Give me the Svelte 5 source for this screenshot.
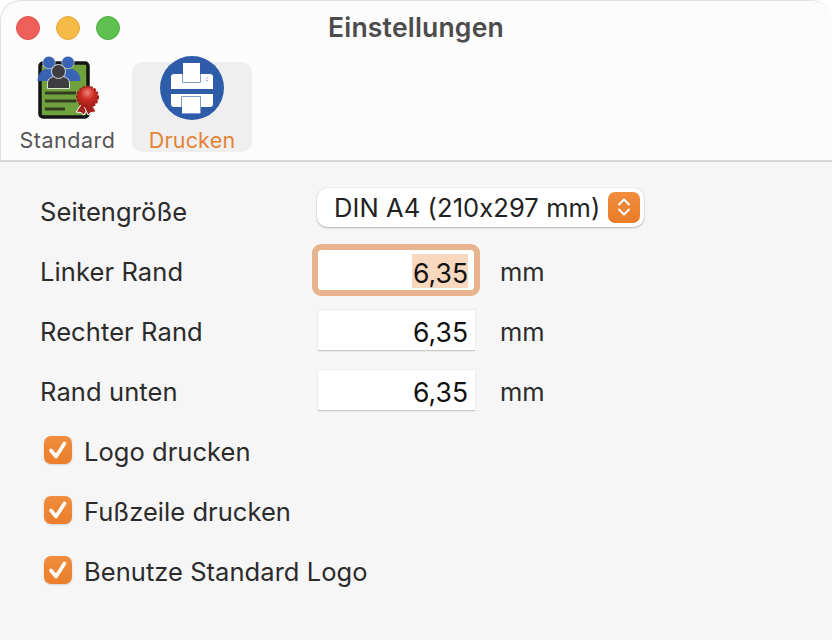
<script lang="ts">
  const fields = [
    { label: 'Linker Rand', value: '6,35', focused: true },
    { label: 'Rechter Rand', value: '6,35', focused: false },
    { label: 'Rand unten', value: '6,35', focused: false },
  ];
  const checks = ['Logo drucken', 'Fußzeile drucken', 'Benutze Standard Logo'];
</script>

<div class="window">
  <header class="toolbar">
    <div class="titlebar">
      <div class="lights">
        <span class="light red"></span>
        <span class="light yellow"></span>
        <span class="light green"></span>
      </div>
      <h1>Einstellungen</h1>
    </div>
    <div class="tabs">
      <div class="tab">
        <svg class="tab-icon" viewBox="0 0 66 66" width="66" height="66">
          <defs>
            <radialGradient id="seal" cx="0.5" cy="0.3" r="0.7">
              <stop offset="0" stop-color="#f0837a" />
              <stop offset="0.45" stop-color="#cf2f26" />
              <stop offset="1" stop-color="#9c1c16" />
            </radialGradient>
          </defs>
          <rect x="5" y="7" width="48" height="54" rx="3" fill="#6fa23c" stroke="#141414" stroke-width="3.500" />
          <path d="M2.500 25c0-6 3-10 8-12h8l4 12z" fill="#3a63b4" />
          <path d="M45.500 25c0-6-3-10-8-12h-8l-4 12z" fill="#3a63b4" />
          <circle cx="14" cy="6.500" r="6.300" fill="#3a63b4" stroke="#fff" stroke-width="0.500" />
          <circle cx="33" cy="6.500" r="6.300" fill="#3a63b4" stroke="#fff" stroke-width="0.500" />
          <path d="M12.500 32.500v-5c0-5 4-7.500 11-7.500s11 2.500 11 7.500v5z" fill="#3e3e42" stroke="#fff" stroke-width="0.800" stroke-linejoin="round" />
          <circle cx="23.500" cy="15.500" r="7" fill="#3e3e42" stroke="#fff" stroke-width="0.800" />
          <path d="M10 37h31M10 45h31M10 53h20" stroke="#333d22" stroke-width="2.800" />
          <path d="M48 46l-7 10 5 .5 3 2.500 5-9z" fill="#a3211b" stroke="#fff" stroke-width="1" />
          <path d="M56 46l5 10-5 .5-3 2.500-4-9z" fill="#a3211b" stroke="#fff" stroke-width="1" />
          <circle cx="52.500" cy="41" r="10.500" fill="url(#seal)" stroke="#a3211b" stroke-width="2" stroke-dasharray="2.500 1.500" />
        </svg>
        <span class="tab-label">Standard</span>
      </div>
      <div class="tab active">
        <svg class="tab-icon" viewBox="0 0 64 64" width="64" height="64">
          <circle cx="32" cy="32" r="32" fill="#2e5ca8" />
          <path d="M14 18h36q3 0 3 3v12H11V21q0-3 3-3z" fill="#fff" />
          <path d="M11 38h42v10q0 3-3 3H14q-3 0-3-3z" fill="#fff" />
          <rect x="22.400" y="7" width="18.200" height="19.600" fill="#2e5ca8" />
          <rect x="23" y="7" width="17" height="19" fill="#fff" />
          <rect x="21.400" y="40.400" width="19.600" height="17.600" fill="#2e5ca8" />
          <rect x="22" y="41" width="18.400" height="16.400" fill="#fff" />
          <circle cx="47" cy="22" r="0.600" fill="#2e5ca8" />
          <circle cx="47" cy="24.500" r="0.600" fill="#2e5ca8" />
        </svg>
        <span class="tab-label">Drucken</span>
      </div>
    </div>
  </header>

  <main class="form">
    <div class="row">
      <span class="label">Seitengröße</span>
      <div class="select">
        <span>DIN A4 (210x297 mm)</span>
        <span class="stepper">
          <svg viewBox="0 0 16 22" width="16" height="22">
            <path d="M3 8.500 8 3.500l5 5M3 13.500 8 18.500l5-5" fill="none" stroke="#fff" stroke-width="2" stroke-linecap="round" stroke-linejoin="round" />
          </svg>
        </span>
      </div>
    </div>

    {#each fields as f}
      <div class="row">
        <span class="label">{f.label}</span>
        <div class="input" class:focused={f.focused}>
          <span class="value" class:selected={f.focused}>{f.value}</span>
        </div>
        <span class="unit">mm</span>
      </div>
    {/each}

    {#each checks as c}
      <div class="check-row">
        <span class="checkbox">
          <svg viewBox="0 0 28 28" width="28" height="28">
            <path d="M7 14.500l5 6 8.500-13" fill="none" stroke="#fff" stroke-width="3.600" stroke-linecap="round" stroke-linejoin="round" />
          </svg>
        </span>
        <span class="check-label">{c}</span>
      </div>
    {/each}
  </main>
</div>

<style>
  :global(body) {
    margin: 0;
    background: #fff;
  }

  .window {
    width: 832px;
    height: 640px;
    overflow: hidden;
    display: flex;
    flex-direction: column;
    background: #f6f6f6;
    border-radius: 20px 20px 0 0;
    font-family: Inter, "Liberation Sans", sans-serif;
    font-feature-settings: "calt" 0;
    color: #262626;
  }

  .toolbar {
    height: 160px;
    flex: none;
    background: #fcfcfc;
    border-bottom: 2px solid #d6d6d6;
    border-radius: 20px 20px 0 0;
    box-shadow: inset 1px 1px 0 #e2e2e2;
  }

  .titlebar {
    height: 54px;
    display: flex;
    align-items: center;
    justify-content: center;
    position: relative;
  }

  .lights {
    position: absolute;
    left: 16px;
    top: 16px;
    display: flex;
    gap: 16px;
  }

  .light {
    width: 24px;
    height: 24px;
    border-radius: 50%;
    box-sizing: border-box;
  }

  .red { background: #f0605a; border: 1px solid #dc544e; }
  .yellow { background: #f6bb47; border: 1px solid #e0a83d; }
  .green { background: #5dc04f; border: 1px solid #50ab44; }

  h1 {
    margin: 0;
    font-size: 26.500px;
    font-weight: 600;
    letter-spacing: 0.200px;
    color: #4c4c4c;
  }

  .tabs {
    display: flex;
    gap: 12px;
    padding-left: 12px;
    margin-top: 2px;
  }

  .tab {
    width: 108px;
    height: 96px;
    position: relative;
    display: flex;
    flex-direction: column;
    align-items: center;
    justify-content: flex-end;
  }

  .tab.active {
    width: 120px;
    margin-top: 6px;
    height: 90px;
    background: #efefef;
    border-radius: 10px;
  }

  .tab-icon {
    position: absolute;
    top: 0;
    left: 23px;
  }

  .tab.active .tab-icon {
    top: -6px;
    left: 28px;
  }

  .tab-label {
    font-size: 21.500px;
    line-height: 24px;
    color: #555;
    letter-spacing: 0.500px;
    margin-left: 3px;
  }

  .tab.active .tab-label {
    color: #e58236;
    letter-spacing: 0.200px;
    margin-left: 0;
  }

  .form {
    display: flex;
    flex-direction: column;
    padding: 19px 0 0 40px;
  }

  .row {
    height: 60px;
    display: flex;
    align-items: center;
  }

  .label {
    width: 277px;
    font-size: 25.500px;
    letter-spacing: 0.100px;
    color: #2b2b2b;
  }

  .select {
    width: 327px;
    height: 39px;
    box-sizing: border-box;
    margin-top: -8px;
    background: #fff;
    border-radius: 10px;
    box-shadow: 0 1px 2px rgb(0 0 0 / 0.25), 0 0 1px rgb(0 0 0 / 0.2);
    display: flex;
    align-items: center;
    justify-content: space-between;
    padding: 0 4px 0 17px;
    font-size: 25.500px;
    letter-spacing: 0.100px;
    color: #222;
    white-space: nowrap;
  }

  .stepper {
    width: 32px;
    height: 31px;
    border-radius: 7px;
    background: linear-gradient(#f08d3c, #e97c28);
    display: flex;
    align-items: center;
    justify-content: center;
  }

  .input {
    width: 157px;
    height: 41px;
    margin-left: 1px;
    margin-bottom: 2px;
    box-sizing: border-box;
    background: #fff;
    border-bottom: 1px solid #c8c8c8;
    box-shadow: 0 0 1px rgb(0 0 0 / 0.25);
    display: flex;
    align-items: center;
    justify-content: flex-end;
    padding: 1px 7px 0 0;
    font-size: 26.500px;
    color: #111;
  }

  .input.focused {
    width: 156px;
    height: 40px;
    margin-right: 1px;
    padding-right: 6px;
    border-bottom: none;
    outline: 6px solid #e8b48e;
    border-radius: 3px;
  }

  .value {
    height: 34px;
    line-height: 38px;
    padding-left: 1px;
  }

  .selected {
    background: #f8d8bf;
  }

  .unit {
    margin-left: 25px;
    font-size: 25.500px;
    color: #2b2b2b;
  }

  .check-row {
    height: 60px;
    display: flex;
    align-items: center;
    gap: 12px;
    padding-left: 4px;
  }

  .checkbox {
    width: 28px;
    height: 28px;
    margin-bottom: 2px;
    border-radius: 7px;
    background: linear-gradient(#f08d3c, #ea7e2b);
    box-shadow: 0 1px 2px rgb(0 0 0 / 0.15);
    display: flex;
  }

  .check-label {
    font-size: 25.500px;
    letter-spacing: 0.050px;
    color: #2b2b2b;
  }
</style>
